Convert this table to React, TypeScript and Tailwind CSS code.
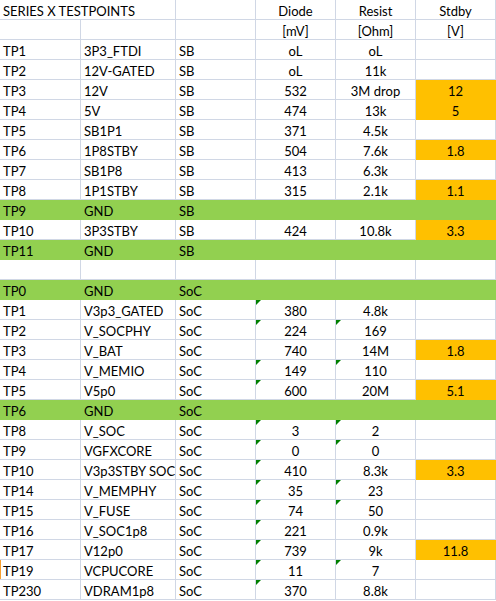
import React from 'react'

type Row = {
  a?: string
  b?: string
  c?: string
  d?: string
  e?: string
  f?: string
  green?: boolean
  orange?: boolean
  triD?: boolean
  triE?: boolean
  mark?: boolean
}

const rows: Row[] = [
  { d: '[mV]', e: '[Ohm]', f: '[V]' },
  { a: 'TP1', b: '3P3_FTDI', c: 'SB', d: 'oL', e: 'oL' },
  { a: 'TP2', b: '12V-GATED', c: 'SB', d: 'oL', e: '11k' },
  { a: 'TP3', b: '12V', c: 'SB', d: '532', e: '3M drop', f: '12', orange: true },
  { a: 'TP4', b: '5V', c: 'SB', d: '474', e: '13k', f: '5', orange: true },
  { a: 'TP5', b: 'SB1P1', c: 'SB', d: '371', e: '4.5k' },
  { a: 'TP6', b: '1P8STBY', c: 'SB', d: '504', e: '7.6k', f: '1.8', orange: true },
  { a: 'TP7', b: 'SB1P8', c: 'SB', d: '413', e: '6.3k' },
  { a: 'TP8', b: '1P1STBY', c: 'SB', d: '315', e: '2.1k', f: '1.1', orange: true },
  { a: 'TP9', b: 'GND', c: 'SB', green: true },
  { a: 'TP10', b: '3P3STBY', c: 'SB', d: '424', e: '10.8k', f: '3.3', orange: true },
  { a: 'TP11', b: 'GND', c: 'SB', green: true },
  {},
  { a: 'TP0', b: 'GND', c: 'SoC', green: true },
  { a: 'TP1', b: 'V3p3_GATED', c: 'SoC', d: '380', e: '4.8k', triD: true },
  { a: 'TP2', b: 'V_SOCPHY', c: 'SoC', d: '224', e: '169', triD: true, triE: true },
  { a: 'TP3', b: 'V_BAT', c: 'SoC', d: '740', e: '14M', f: '1.8', orange: true },
  { a: 'TP4', b: 'V_MEMIO', c: 'SoC', d: '149', e: '110', triD: true, triE: true },
  { a: 'TP5', b: 'V5p0', c: 'SoC', d: '600', e: '20M', f: '5.1', orange: true, triD: true },
  { a: 'TP6', b: 'GND', c: 'SoC', green: true },
  { a: 'TP8', b: 'V_SOC', c: 'SoC', d: '3', e: '2', triD: true, triE: true },
  { a: 'TP9', b: 'VGFXCORE', c: 'SoC', d: '0', e: '0', triD: true, triE: true },
  { a: 'TP10', b: 'V3p3STBY SOC', c: 'SoC', d: '410', e: '8.3k', f: '3.3', orange: true, triD: true },
  { a: 'TP14', b: 'V_MEMPHY', c: 'SoC', d: '35', e: '23', triD: true, triE: true },
  { a: 'TP15', b: 'V_FUSE', c: 'SoC', d: '74', e: '50', triD: true, triE: true },
  { a: 'TP16', b: 'V_SOC1p8', c: 'SoC', d: '221', e: '0.9k', triD: true },
  { a: 'TP17', b: 'V12p0', c: 'SoC', d: '739', e: '9k', f: '11.8', orange: true, triD: true },
  { a: 'TP19', b: 'VCPUCORE', c: 'SoC', d: '11', e: '7', triD: true, triE: true, mark: true },
  { a: 'TP230', b: 'VDRAM1p8', c: 'SoC', d: '370', e: '8.8k', triD: true },
]

// little green "number stored as text" flag in the corner
const Tri = () => (
  <span className="absolute left-0 top-0 h-0 w-0 border-r-[5px] border-t-[5px] border-r-transparent border-t-[#008000]" />
)

const Cell = ({
  children,
  center,
  fill,
  tri,
  mark,
}: {
  children?: React.ReactNode
  center?: boolean
  fill?: 'green' | 'orange'
  tri?: boolean
  mark?: boolean
}) => {
  const bg =
    fill === 'green'
      ? 'bg-[#92d050] border-[#92d050]'
      : fill === 'orange'
        ? 'bg-[#ffc000] border-[#ffc000]'
        : 'bg-white border-[#d0d7e5]'
  return (
    <div
      className={`relative h-5 whitespace-nowrap border-b border-r pt-[4px] leading-[15px] ${bg} ${
        center ? 'text-center' : 'pl-[3px]'
      } ${mark ? 'shadow-[inset_1px_0_0_#f7a030]' : ''}`}
    >
      {tri && <Tri />}
      {children}
    </div>
  )
}

export default function App() {
  return (
    <div className="h-[601px] w-[496px] overflow-hidden bg-white text-[13px] text-black [font-family:Lato,'Open_Sans',sans-serif]">
      <div className="grid grid-cols-[81px_95px_80px_80px_80px_80px]">
        <div className="col-span-2">
          <Cell>SERIES X TESTPOINTS</Cell>
        </div>
        <Cell />
        <Cell center>Diode</Cell>
        <Cell center>Resist</Cell>
        <Cell center>Stdby</Cell>

        {rows.map((r, i) => {
          const g = r.green ? 'green' : undefined
          return (
            <React.Fragment key={i}>
              <Cell fill={g} mark={r.mark}>
                {r.a}
              </Cell>
              <Cell fill={g}>{r.b}</Cell>
              <Cell fill={g}>{r.c}</Cell>
              <Cell fill={g} center tri={r.triD}>
                {r.d}
              </Cell>
              <Cell fill={g} center tri={r.triE}>
                {r.e}
              </Cell>
              <Cell fill={r.green ? 'green' : r.orange ? 'orange' : undefined} center>
                {r.f}
              </Cell>
            </React.Fragment>
          )
        })}
      </div>
    </div>
  )
}
